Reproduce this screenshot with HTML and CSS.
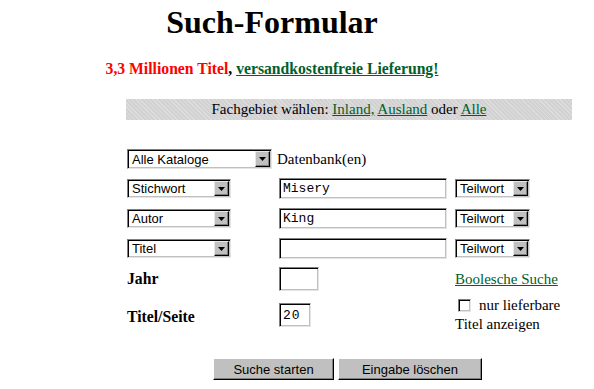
FILE: index.html
```html
<!DOCTYPE html>
<html lang="de">
<head>
<meta charset="utf-8">
<title>Such-Formular</title>
<link rel="stylesheet" href="styles.css">
</head>
<body>
<div class="page">
  <h1 class="title">Such-Formular</h1>
  <p class="tagline"><span class="red">3,3 Millionen Titel</span>, <a href="#" class="link">versandkostenfreie Lieferung!</a></p>
  <div class="bar">Fachgebiet wählen: <a href="#" class="link">Inland,</a> <a href="#" class="link">Ausland</a> oder <a href="#" class="link">Alle</a></div>

  <form class="form">
    <div class="row row-first">
      <div class="sel sel-kat"><span class="sel-text">Alle Kataloge</span><span class="sel-btn"><svg width="7" height="4" viewBox="0 0 7 4"><polygon points="0,0 7,0 3.5,4" fill="#000"/></svg></span></div>
      <span class="db">Datenbank(en)</span>
    </div>

    <div class="row row-field">
      <div class="c1"><div class="sel sel-field"><span class="sel-text">Stichwort</span><span class="sel-btn"><svg width="7" height="4" viewBox="0 0 7 4"><polygon points="0,0 7,0 3.5,4" fill="#000"/></svg></span></div></div>
      <div class="c2"><input class="inp inp-text" type="text" value="Misery"></div>
      <div class="c3"><div class="sel sel-mode"><span class="sel-text">Teilwort</span><span class="sel-btn"><svg width="7" height="4" viewBox="0 0 7 4"><polygon points="0,0 7,0 3.5,4" fill="#000"/></svg></span></div></div>
    </div>

    <div class="row row-field">
      <div class="c1"><div class="sel sel-field"><span class="sel-text">Autor</span><span class="sel-btn"><svg width="7" height="4" viewBox="0 0 7 4"><polygon points="0,0 7,0 3.5,4" fill="#000"/></svg></span></div></div>
      <div class="c2"><input class="inp inp-text" type="text" value="King"></div>
      <div class="c3"><div class="sel sel-mode"><span class="sel-text">Teilwort</span><span class="sel-btn"><svg width="7" height="4" viewBox="0 0 7 4"><polygon points="0,0 7,0 3.5,4" fill="#000"/></svg></span></div></div>
    </div>

    <div class="row row-field">
      <div class="c1"><div class="sel sel-field"><span class="sel-text">Titel</span><span class="sel-btn"><svg width="7" height="4" viewBox="0 0 7 4"><polygon points="0,0 7,0 3.5,4" fill="#000"/></svg></span></div></div>
      <div class="c2"><input class="inp inp-text" type="text" value=""></div>
      <div class="c3"><div class="sel sel-mode"><span class="sel-text">Teilwort</span><span class="sel-btn"><svg width="7" height="4" viewBox="0 0 7 4"><polygon points="0,0 7,0 3.5,4" fill="#000"/></svg></span></div></div>
    </div>

    <div class="row row-year">
      <div class="c1"><span class="lbl">Jahr</span></div>
      <div class="c2"><input class="inp inp-year" type="text" value=""></div>
      <div class="c3"><a href="#" class="link bool">Boolesche Suche</a></div>
    </div>

    <div class="row row-per">
      <div class="c1"><span class="lbl lbl-per">Titel/Seite</span></div>
      <div class="c2"><input class="inp inp-per" type="text" value="20"></div>
      <div class="c3 avail"><span class="chk"></span>nur lieferbare<br>Titel anzeigen</div>
    </div>

    <div class="buttons">
      <button type="button" class="btn btn-go">Suche starten</button>
      <button type="button" class="btn btn-clear">Eingabe löschen</button>
    </div>
  </form>
</div>
</body>
</html>
```

FILE: styles.css
```css
html, body {
  margin: 0;
  padding: 0;
  background: #fff;
}

body {
  font-family: "Liberation Serif", "Times New Roman", serif;
  color: #000;
}

.page {
  width: 594px;
}

.title {
  width: 528px;
  margin: 4px 0 0 8px;
  text-align: center;
  font: bold 32px/36px "Liberation Serif", serif;
}

.tagline {
  width: 528px;
  margin: 19px 0 0 8px;
  text-align: center;
  font: bold 15.7px/20px "Liberation Serif", serif;
}

.red {
  color: #ff0000;
}

.link {
  color: #00602d;
  text-decoration: underline;
}

.bar {
  margin: 20px 0 0 126px;
  width: 446px;
  height: 21px;
  line-height: 21px;
  text-align: center;
  font-size: 15px;
  background-color: #d2d2d2;
  background-image: repeating-linear-gradient(45deg, rgba(255,255,255,0.25) 0 1px, rgba(0,0,0,0) 1px 3px);
}

.form {
  margin: 29px 0 0 127px;
  font-size: 15px;
}

.row {
  display: flex;
  align-items: center;
}

.row-first {
  height: 20px;
}

.row-field {
  margin-top: 9px;
  height: 21px;
}

.row-year {
  margin-top: 8px;
  height: 24px;
}

.row-per {
  margin-top: 5px;
  align-items: flex-start;
}

.c1 {
  width: 152px;
  flex: none;
}

.c2 {
  width: 176px;
  flex: none;
  display: flex;
}

.c3 {
  flex: none;
}

/* fake select */
.sel {
  box-sizing: border-box;
  display: flex;
  align-items: center;
  background: #fff;
  border: 1px solid;
  border-color: #808080 #e4e4e4 #e4e4e4 #808080;
  box-shadow: inset 1px 1px #000, inset -1px -1px #c0c0c0;
  padding: 1px;
  font: 13px "Liberation Sans", Arial, sans-serif;
}

.sel-text {
  flex: 1;
  padding-left: 3px;
  white-space: nowrap;
  overflow: hidden;
}

.sel-btn {
  box-sizing: border-box;
  width: 15px;
  height: 100%;
  flex: none;
  display: flex;
  align-items: center;
  justify-content: center;
  background: #c0c0c0;
  border: 1px solid;
  border-color: #e8e8e8 #000 #000 #e8e8e8;
  box-shadow: inset -1px -1px #808080;
}

.sel-kat {
  width: 145px;
  height: 20px;
}

.sel-field {
  width: 104px;
  height: 19px;
}

.sel-mode {
  width: 75px;
  height: 19px;
}

.db {
  margin-left: 5px;
  line-height: 20px;
}

/* text inputs */
.inp {
  box-sizing: border-box;
  margin: 0;
  border: 1px solid;
  border-color: #808080 #e4e4e4 #e4e4e4 #808080;
  box-shadow: inset 1px 1px #000, inset -1px -1px #c0c0c0;
  background: #fff;
  padding: 0 0 0 3px;
  font: 13px "Liberation Mono", "Courier New", monospace;
  color: #000;
  outline: none;
}

.inp-text {
  width: 168px;
  height: 21px;
}

.inp-year {
  width: 40px;
  height: 24px;
}

.inp-per {
  width: 32px;
  height: 24px;
  margin-top: 7px;
  letter-spacing: 1px;
}

.lbl {
  font-weight: bold;
  font-size: 15.7px;
  line-height: 20px;
}

.lbl-per {
  display: block;
  margin-top: 11px;
}

.bool {
  line-height: 20px;
}

.avail {
  line-height: 19px;
}

.chk {
  display: inline-block;
  box-sizing: border-box;
  width: 13px;
  height: 13px;
  margin: 0 8px 0 3px;
  vertical-align: -2px;
  background: #fff;
  border: 1px solid;
  border-color: #808080 #e4e4e4 #e4e4e4 #808080;
  box-shadow: inset 1px 1px #000, inset -1px -1px #c0c0c0;
}

.buttons {
  display: flex;
  gap: 4px;
  margin: 24px 0 0 86px;
}

.btn {
  box-sizing: border-box;
  height: 22px;
  margin: 0;
  padding: 0;
  background: #c0c0c0;
  border: 1px solid;
  border-color: #fff #000 #000 #fff;
  box-shadow: inset -1px -1px #808080;
  font: 13px "Liberation Sans", Arial, sans-serif;
  color: #000;
}

.btn-go {
  width: 121px;
}

.btn-clear {
  width: 144px;
}
```
